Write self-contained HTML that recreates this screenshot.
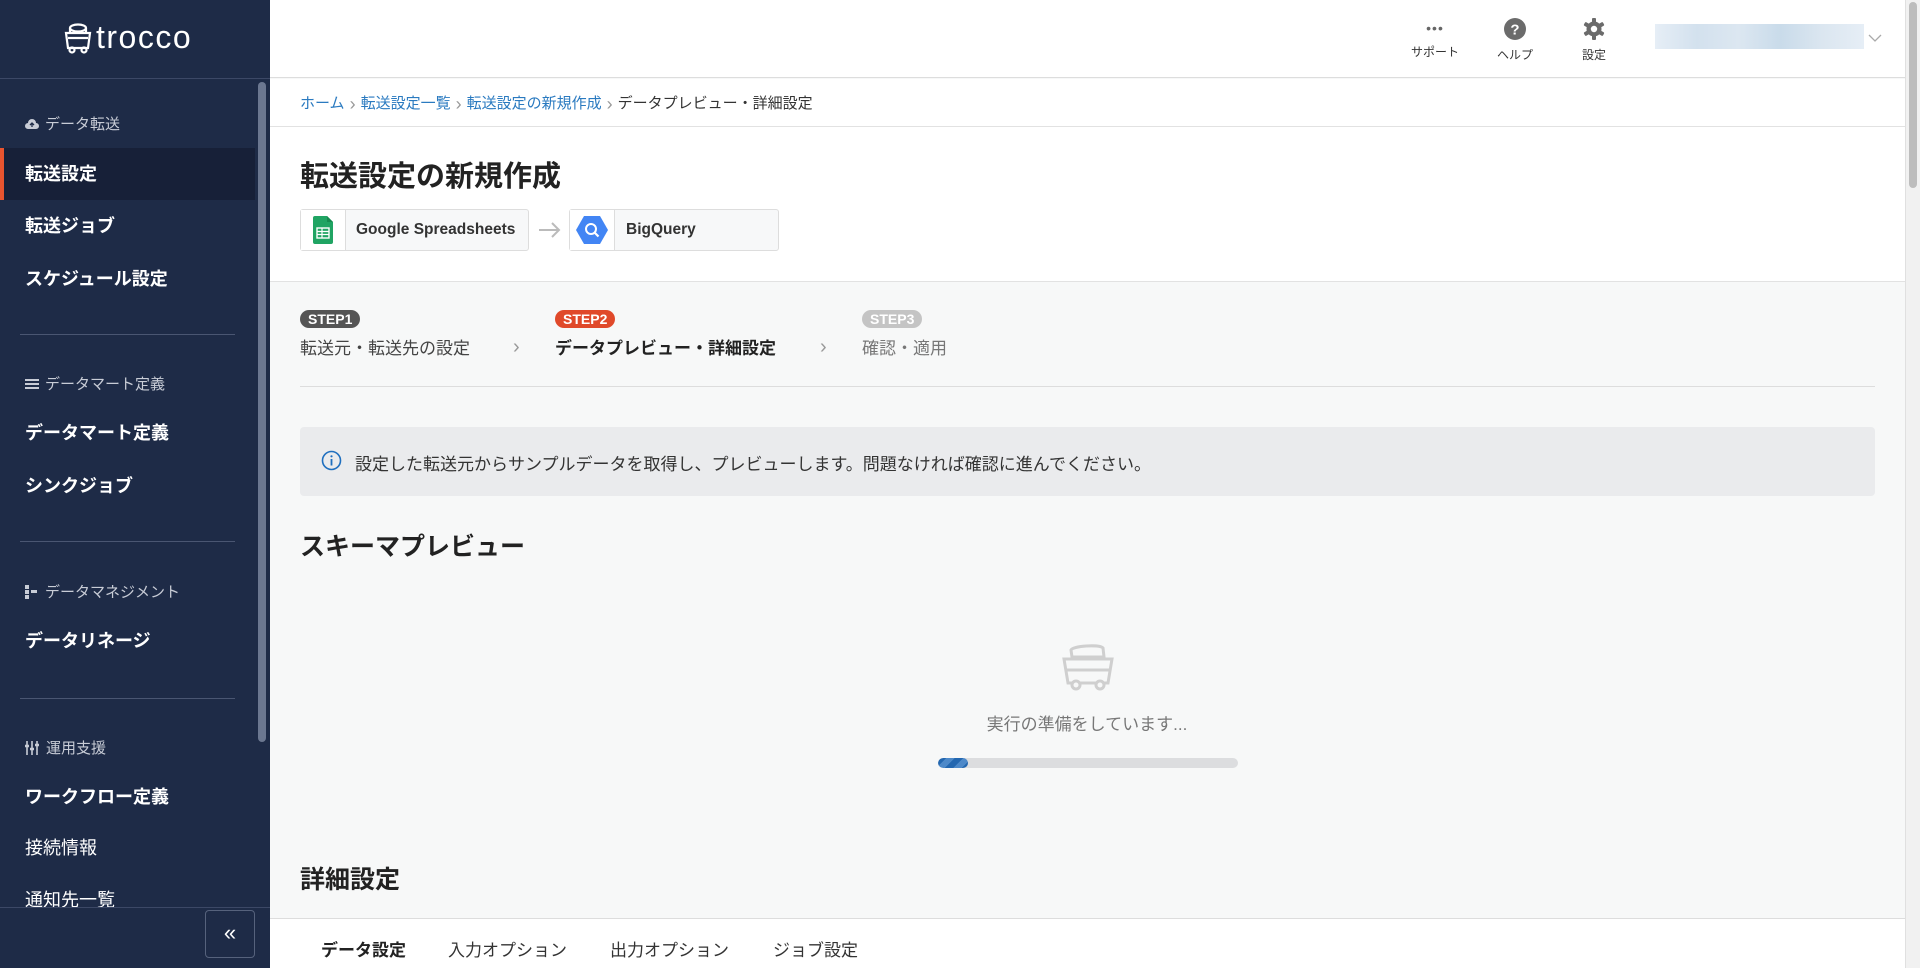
<!DOCTYPE html>
<html><head><meta charset="utf-8"><style>
*{box-sizing:border-box;margin:0;padding:0}
body{width:1920px;height:968px;overflow:hidden;font-family:"Liberation Sans","Noto Sans CJK JP",sans-serif;background:#f7f8f8;position:relative;color:#222}
.abs{position:absolute}
#sb{left:0;top:0;width:270px;height:968px;background:#1e2b47;overflow:hidden}
.sl{position:absolute;left:25px;color:#c8ccd6;font-size:15px;display:flex;align-items:center;gap:6px}
.si{position:absolute;left:25px;color:#fff;font-size:18px;font-weight:bold}
.dv{position:absolute;left:20px;width:215px;height:1px;background:#4a5672}
.t{white-space:nowrap}
.bc{color:#999;font-size:18px;margin:0 5px;position:relative;top:2px}
</style></head><body>
<div id="sb" class="abs">
 <div class="abs" style="left:0;top:78px;width:270px;height:1px;background:#3c4866"></div>
 <div class="abs t" style="left:64px;top:19px;display:flex;align-items:center;gap:4px;color:#fff;font-size:32px;letter-spacing:1.5px">
  <svg width="28" height="32" viewBox="0 0 28 32" fill="none" stroke="#fff" stroke-width="2.2"><ellipse cx="14" cy="6" rx="8" ry="3.5"/><path d="M6 6v4M22 6v4M2 11h24l-2 15H4z"/><path d="M4 16h20"/><circle cx="8" cy="28" r="2.5"/><circle cx="20" cy="28" r="2.5"/></svg>
  <span>trocco</span></div>
 <div class="abs" style="left:258px;top:82px;width:8px;height:660px;background:#6b7790;border-radius:4px"></div>
 <div class="sl t" style="top:113px"><svg width="14" height="12" viewBox="0 0 14 12"><path d="M3 11a3 3 0 0 1 0-6 4 4 0 0 1 8 0 3 3 0 0 1 0 6z" fill="#c8ccd6"/><path d="M7 9V5M5 7l2-2 2 2" stroke="#1e2b47" stroke-width="1.3" fill="none"/></svg>データ転送</div>
 <div class="abs" style="left:0;top:148px;width:255px;height:52px;background:#172038"></div>
 <div class="abs" style="left:0;top:148px;width:4px;height:52px;background:#e8542f"></div>
 <div class="si t" style="top:160px">転送設定</div>
 <div class="si t" style="top:212px">転送ジョブ</div>
 <div class="si t" style="top:265px">スケジュール設定</div>
 <div class="dv" style="top:334px"></div>
 <div class="sl t" style="top:373px"><svg width="14" height="12"><rect y="1" width="14" height="2" fill="#c8ccd6"/><rect y="5" width="14" height="2" fill="#c8ccd6"/><rect y="9" width="14" height="2" fill="#c8ccd6"/></svg>データマート定義</div>
 <div class="si t" style="top:419px">データマート定義</div>
 <div class="si t" style="top:472px">シンクジョブ</div>
 <div class="dv" style="top:541px"></div>
 <div class="sl t" style="top:581px"><svg width="14" height="14"><rect x="0" y="0" width="4" height="4" fill="#c8ccd6"/><rect x="0" y="5" width="4" height="4" fill="#c8ccd6"/><rect x="0" y="10" width="4" height="4" fill="#c8ccd6"/><rect x="6" y="5" width="6" height="3" fill="#c8ccd6"/></svg>データマネジメント</div>
 <div class="si t" style="top:627px">データリネージ</div>
 <div class="dv" style="top:698px"></div>
 <div class="sl t" style="top:737px"><svg width="15" height="14" stroke="#c8ccd6" stroke-width="1.6"><path d="M2 0v14M7 0v14M12 0v14"/><path d="M0 5h4M5 8h4M10 4h4" stroke-width="2.4"/></svg>運用支援</div>
 <div class="si t" style="top:783px">ワークフロー定義</div>
 <div class="si t" style="top:834px;font-weight:normal">接続情報</div>
 <div class="si t" style="top:886px;font-weight:normal">通知先一覧</div>
 <div class="abs" style="left:0;top:907px;width:270px;height:61px;background:#1e2b47;border-top:1px solid #3c4866"></div>
 <div class="abs" style="left:205px;top:910px;width:50px;height:48px;border:1px solid #56627c;border-radius:4px;color:#fff;font-size:22px;text-align:center;line-height:44px">«</div>
</div>
<div class="abs" style="left:270px;top:0;width:1635px;height:78px;background:#fff;border-bottom:1px solid #ddd"></div>
<div class="abs t" style="left:1400px;top:20px;width:70px;text-align:center;color:#333;font-size:12px"><div style="color:#666;font-size:14px;line-height:16px;letter-spacing:1px">•••</div><div style="margin-top:7px">サポート</div></div>
<div class="abs t" style="left:1480px;top:18px;width:70px;text-align:center;color:#333;font-size:12px"><svg width="22" height="22"><circle cx="11" cy="11" r="11" fill="#6b6b6b"/><text x="11" y="16.5" text-anchor="middle" fill="#fff" font-size="15" font-weight="bold" font-family="Liberation Sans">?</text></svg><div style="margin-top:3px">ヘルプ</div></div>
<div class="abs t" style="left:1559px;top:18px;width:70px;text-align:center;color:#333;font-size:12px"><svg width="22" height="22" viewBox="0 0 22 22"><g fill="#6b6b6b"><circle cx="11" cy="11" r="7.5"/><rect x="9" y="0" width="4" height="22" rx="1"/><rect x="9" y="0" width="4" height="22" rx="1" transform="rotate(60 11 11)"/><rect x="9" y="0" width="4" height="22" rx="1" transform="rotate(120 11 11)"/></g><circle cx="11" cy="11" r="3.2" fill="#fff"/></svg><div style="margin-top:3px">設定</div></div>
<div class="abs" style="left:1655px;top:24px;width:209px;height:25px;background:linear-gradient(90deg,#e6eef6,#d3e1ee 20%,#dce7f1 40%,#c9dbea 60%,#dbe6f0 80%,#e6eef6)"></div>
<svg class="abs" style="left:1868px;top:34px" width="14" height="9"><path d="M1 1l6 6 6-6" stroke="#aaa" stroke-width="1.3" fill="none"/></svg>
<div class="abs" style="left:1905px;top:0;width:15px;height:968px;background:#f1f1f1;border-left:1px solid #e0e0e0"><div style="margin:2px 3px;width:8px;height:186px;background:#bdbdbd;border-radius:4px"></div></div>
<div class="abs" style="left:270px;top:79px;width:1635px;height:203px;background:#fff;border-bottom:1px solid #e2e2e2"></div>
<div class="abs" style="left:270px;top:126px;width:1635px;height:1px;background:#e2e2e2"></div>
<div class="abs t" style="left:300px;top:92px;font-size:15px;color:#2a7ac0">ホーム<span class="bc">›</span>転送設定一覧<span class="bc">›</span>転送設定の新規作成<span class="bc">›</span><span style="color:#333">データプレビュー・詳細設定</span></div>
<div class="abs t" style="left:300px;top:153px;font-size:29px;font-weight:bold;color:#222">転送設定の新規作成</div>
<div class="abs" style="left:300px;top:209px;width:229px;height:42px;border:1px solid #ddd;border-radius:3px;background:#f7f8f9;display:flex;align-items:center">
 <div style="width:45px;height:40px;background:#fff;border-right:1px solid #ddd;display:flex;align-items:center;justify-content:center"><svg width="20" height="28" viewBox="0 0 20 28"><path d="M0 2a2 2 0 0 1 2-2h12l6 6v20a2 2 0 0 1-2 2H2a2 2 0 0 1-2-2z" fill="#20a463"/><path d="M14 0v6h6" fill="#168a50"/><rect x="4" y="12" width="12" height="10" fill="none" stroke="#fff" stroke-width="1.4"/><path d="M4 15.5h12M4 18.5h12M9 12v10" stroke="#fff" stroke-width="1.2"/></svg></div>
 <span class="t" style="margin-left:10px;font-size:15.5px;font-weight:bold;color:#333">Google Spreadsheets</span></div>
<svg class="abs" style="left:538px;top:222px" width="24" height="16"><path d="M1 8h20M14 1l7 7-7 7" stroke="#bbb" stroke-width="2" fill="none"/></svg>
<div class="abs" style="left:569px;top:209px;width:210px;height:42px;border:1px solid #ddd;border-radius:3px;background:#f7f8f9;display:flex;align-items:center">
 <div style="width:45px;height:40px;background:#fff;border-right:1px solid #ddd;display:flex;align-items:center;justify-content:center"><svg width="32" height="30" viewBox="0 0 32 30"><path d="M8 1h16l8 14-8 14H8L0 15z" fill="#4285f4"/><circle cx="15" cy="14" r="5" fill="none" stroke="#fff" stroke-width="2"/><path d="M18.5 17.5l4 4" stroke="#fff" stroke-width="2.2"/></svg></div>
 <span class="t" style="margin-left:11px;font-size:15.5px;font-weight:bold;color:#333">BigQuery</span></div>
<div class="abs t" style="left:300px;top:310px;background:#555;color:#fff;font-size:14px;font-weight:bold;border-radius:10px;padding:1px 8px">STEP1</div>
<div class="abs t" style="left:300px;top:334px;font-size:17px;color:#444">転送元・転送先の設定</div>
<div class="abs" style="left:513px;top:336px;color:#999;font-size:20px">›</div>
<div class="abs t" style="left:555px;top:310px;background:#e0492a;color:#fff;font-size:14px;font-weight:bold;border-radius:10px;padding:1px 8px">STEP2</div>
<div class="abs t" style="left:555px;top:334px;font-size:17px;color:#222;font-weight:bold">データプレビュー・詳細設定</div>
<div class="abs" style="left:820px;top:336px;color:#999;font-size:20px">›</div>
<div class="abs t" style="left:862px;top:310px;background:#c4c4c4;color:#fff;font-size:14px;font-weight:bold;border-radius:10px;padding:1px 8px">STEP3</div>
<div class="abs t" style="left:862px;top:334px;font-size:17px;color:#777">確認・適用</div>
<div class="abs" style="left:300px;top:386px;width:1575px;height:1px;background:#ddd"></div>
<div class="abs" style="left:300px;top:427px;width:1575px;height:69px;background:#eaebed;border-radius:4px"></div>
<svg class="abs" style="left:321px;top:450px" width="21" height="21"><circle cx="10.5" cy="10.5" r="9" fill="none" stroke="#1f6fbf" stroke-width="1.6"/><rect x="9.6" y="9" width="1.8" height="6.5" fill="#1f6fbf"/><circle cx="10.5" cy="6.3" r="1.1" fill="#1f6fbf"/></svg>
<div class="abs t" style="left:355px;top:450px;font-size:17px;color:#333">設定した転送元からサンプルデータを取得し、プレビューします。問題なければ確認に進んでください。</div>
<div class="abs t" style="left:300px;top:527px;font-size:25px;font-weight:bold;color:#222">スキーマプレビュー</div>
<svg class="abs" style="left:1062px;top:640px" width="52" height="52" viewBox="0 0 52 52" fill="none" stroke="#cfcfcf" stroke-width="3"><path d="M9 10c2-4 28-6 32-2l1 9H10z"/><path d="M2 19h48l-4 24H6z"/><path d="M5 30h42"/><circle cx="14" cy="45" r="4" fill="#f7f8f8"/><circle cx="38" cy="45" r="4" fill="#f7f8f8"/></svg>
<div class="abs t" style="left:937px;top:710px;width:300px;text-align:center;font-size:17px;color:#777">実行の準備をしています...</div>
<div class="abs" style="left:938px;top:758px;width:300px;height:10px;background:#dcdddf;border-radius:5px;overflow:hidden"><div style="width:30px;height:10px;border-radius:5px;background:repeating-linear-gradient(135deg,#2367b0 0 6px,#4d89c9 6px 12px)"></div></div>
<div class="abs t" style="left:300px;top:860px;font-size:25px;font-weight:bold;color:#222">詳細設定</div>
<div class="abs" style="left:270px;top:918px;width:1635px;height:50px;background:#fff;border-top:1px solid #ddd"></div>
<div class="abs t" style="left:321px;top:936px;font-size:17px;color:#222;font-weight:bold">データ設定</div>
<div class="abs t" style="left:448px;top:936px;font-size:17px;color:#333">入力オプション</div>
<div class="abs t" style="left:610px;top:936px;font-size:17px;color:#333">出力オプション</div>
<div class="abs t" style="left:773px;top:936px;font-size:17px;color:#333">ジョブ設定</div>
</body></html>
